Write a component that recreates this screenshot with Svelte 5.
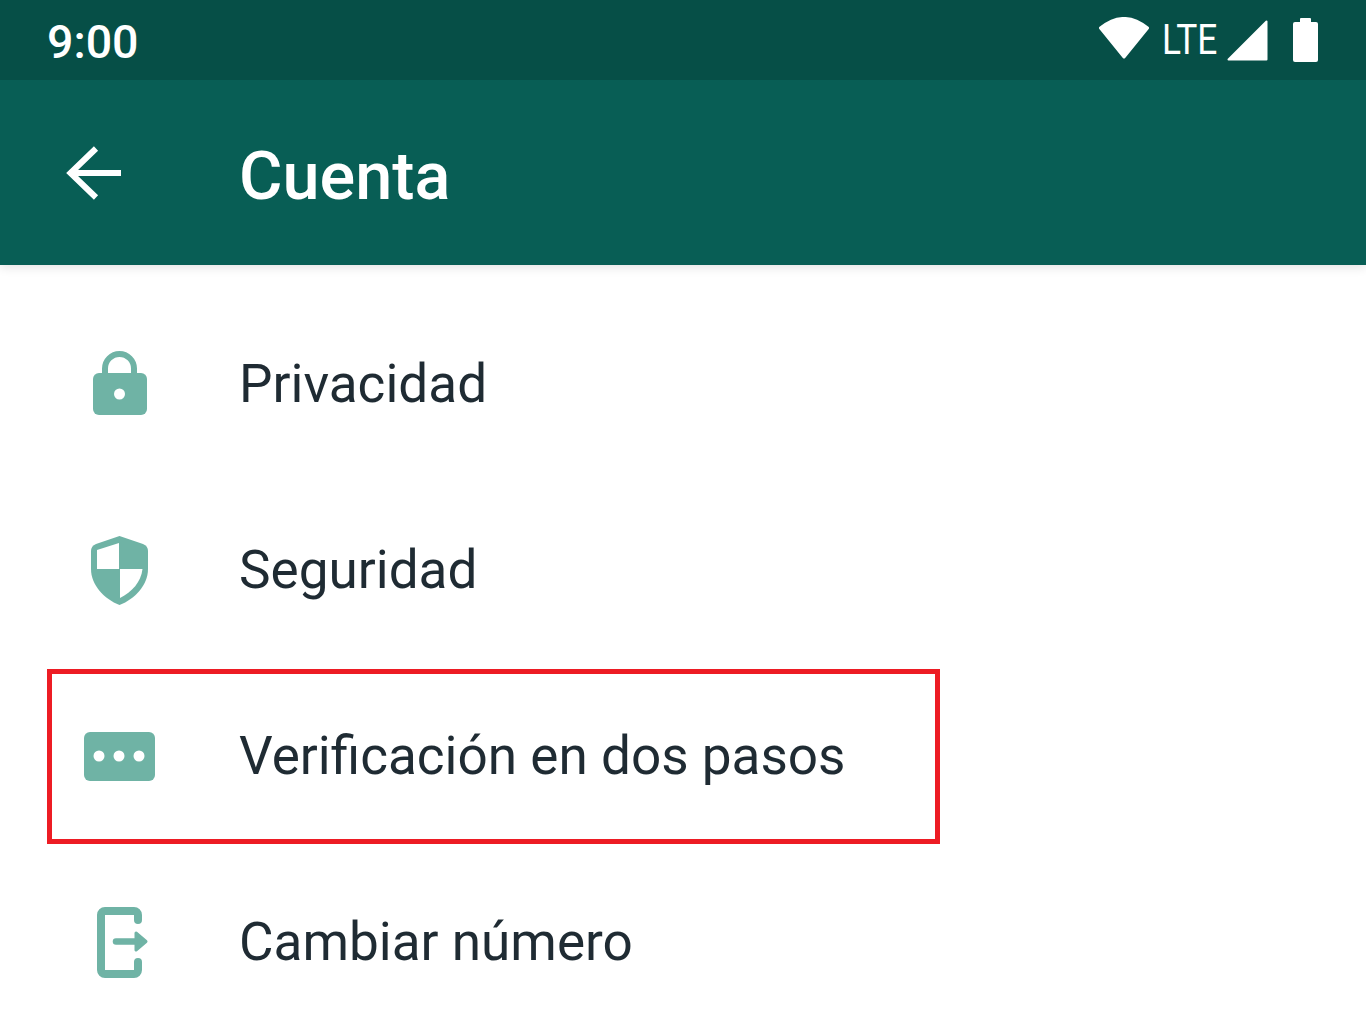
<script>
  const rows = [
    { label: 'Privacidad', icon: 'lock' },
    { label: 'Seguridad', icon: 'shield' },
    { label: 'Verificación en dos pasos', icon: 'dots', marked: true },
    { label: 'Cambiar número', icon: 'phone' }
  ];
</script>

<div class="screen">
  <header>
    <div class="status">
      <span class="time">9:00</span>
      <div class="status-icons">
        <svg class="wifi" width="52" height="42" viewBox="0 0 52 42">
          <path d="M2.5 11Q26 -8 49.5 11L26 40Z" fill="#fff" stroke="#fff" stroke-width="3" stroke-linejoin="round" />
        </svg>
        <span class="lte">LTE</span>
        <svg class="signal" width="41" height="41" viewBox="0 0 41 41">
          <path d="M39.5 1.5V39.5H1.5Z" fill="#fff" stroke="#fff" stroke-width="2" stroke-linejoin="round" />
        </svg>
        <svg class="battery" width="25" height="44" viewBox="0 0 25 44">
          <rect x="7" y="0" width="11" height="7" rx="1" fill="#fff" />
          <rect x="0" y="4" width="25" height="40" rx="2" fill="#fff" />
        </svg>
      </div>
    </div>
    <div class="toolbar">
      <div class="slot back">
        <svg width="60" height="60" viewBox="0 0 60 60">
          <path d="M60 30H8M35 5.500L9.500 30L35 54.500" fill="none" stroke="#fff" stroke-width="6" />
        </svg>
      </div>
      <h1>Cuenta</h1>
    </div>
  </header>

  <ul>
    {#each rows as row}
      <li>
        <div class="slot">
          {#if row.icon === 'lock'}
            <svg width="100" height="90" viewBox="0 0 100 90">
              <rect x="23" y="34" width="54" height="42" rx="6" fill="#6fb3a5" />
              <path d="M35 38V29.500a14.500 14.500 0 0 1 29 0V38" fill="none" stroke="#6fb3a5" stroke-width="6" />
              <circle cx="49.500" cy="55" r="5.500" fill="#fff" />
            </svg>
          {:else if row.icon === 'shield'}
            <svg width="100" height="90" viewBox="0 0 100 90">
              <path d="M49.500 11L73 19q5 2 5 7V44C78 60 65 74 49.500 80C34 74 21 60 21 44V26q0-5 5-7Z" fill="#6fb3a5" />
              <path d="M27 25L49 18V44H27Z" fill="#fff" />
              <path d="M50 44H72.500C71 57 62 67 50 73Z" fill="#fff" />
            </svg>
          {:else if row.icon === 'dots'}
            <svg class="dots" width="71" height="49" viewBox="0 0 71 49">
              <rect width="71" height="49" rx="6" fill="#6fb3a5" />
              <circle cx="15" cy="24" r="5.500" fill="#fff" />
              <circle cx="35" cy="24" r="5.500" fill="#fff" />
              <circle cx="55" cy="24" r="5.500" fill="#fff" />
            </svg>
          {:else}
            <svg width="100" height="95" viewBox="0 0 100 95">
              <path d="M68 25V20a4 4 0 0 0-4-4H35a4 4 0 0 0-4 4V75a4 4 0 0 0 4 4H64a4 4 0 0 0 4-4V67" fill="none" stroke="#6fb3a5" stroke-width="8" stroke-linecap="round" />
              <path d="M46 46.500H66" stroke="#6fb3a5" stroke-width="6.500" stroke-linecap="round" />
              <path d="M66 38L76 46.500L66 55Z" fill="#6fb3a5" stroke="#6fb3a5" stroke-width="3" stroke-linejoin="round" />
            </svg>
          {/if}
        </div>
        <span class="label">{row.label}</span>
        {#if row.marked}<div class="marker"></div>{/if}
      </li>
    {/each}
  </ul>
</div>

<style>
  :global(body) { margin: 0; background: #fff; }

  .screen { height: 1028px; overflow: hidden; font-family: Roboto, sans-serif; }

  header { position: relative; box-shadow: 0 2px 10px rgba(0,0,0,0.12); }

  .status {
    height: 80px; background: #064f47; color: #fff;
    display: flex; align-items: center; justify-content: space-between;
    padding: 0 48px 0 47px;
  }
  .time { font-size: 46.500px; font-weight: 500; line-height: 80px; padding-top: 3px; }
  .status-icons { display: flex; align-items: center; }
  .wifi { margin-right: 12px; margin-top: -4px; }
  .lte {
    width: 54px; margin-right: 11px; font-size: 42px; line-height: 1;
    transform: scaleX(0.84); transform-origin: left center;
  }
  .signal { margin-right: 25px; }

  .toolbar {
    height: 185px; background: #085e55;
    display: grid; grid-template-columns: 239px 1fr; align-items: center;
  }
  .back { padding-left: 1px; padding-right: 58px; }
  h1 { margin: 0; padding-top: 6px; color: #fff; font-size: 66.600px; font-weight: 500; }

  .slot { display: flex; align-items: center; justify-content: center; }
  .dots { margin-right: 1px; }

  ul { list-style: none; margin: 0; padding: 26px 0 0; }
  li {
    position: relative; height: 186px;
    display: grid; grid-template-columns: 239px 1fr; align-items: center;
  }
  .label { font-size: 53.100px; color: #1f2b33; }
  .marker {
    position: absolute; left: 47px; top: 6px;
    width: 893px; height: 175px; box-sizing: border-box;
    border: 5px solid #ed1c24;
  }
</style>
